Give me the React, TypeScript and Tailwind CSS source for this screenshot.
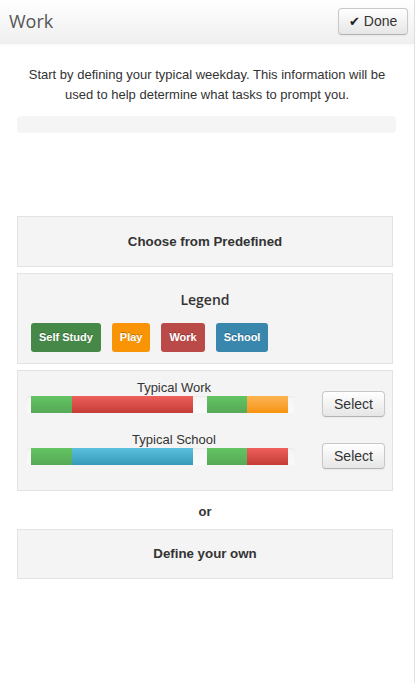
import React from 'react';

type Seg = { color: string; w: number };

const GREEN = 'bg-gradient-to-b from-[#62c462] to-[#57a957]';
const RED = 'bg-gradient-to-b from-[#ee5f5b] to-[#c43c35]';
const ORANGE = 'bg-gradient-to-b from-[#fbb450] to-[#f89406]';
const BLUE = 'bg-gradient-to-b from-[#5bc0de] to-[#339bb9]';

const templates: { name: string; segs: Seg[] }[] = [
  {
    name: 'Typical Work',
    segs: [
      { color: GREEN, w: 41 },
      { color: RED, w: 121 },
      { color: '', w: 14 },
      { color: GREEN, w: 40 },
      { color: ORANGE, w: 41 },
    ],
  },
  {
    name: 'Typical School',
    segs: [
      { color: GREEN, w: 41 },
      { color: BLUE, w: 121 },
      { color: '', w: 14 },
      { color: GREEN, w: 40 },
      { color: RED, w: 41 },
    ],
  },
];

const legend = [
  { label: 'Self Study', cls: 'bg-[#468847]' },
  { label: 'Play', cls: 'bg-[#f89406]' },
  { label: 'Work', cls: 'bg-[#b94a48]' },
  { label: 'School', cls: 'bg-[#3a87ad]' },
];

function Button({ children, className = '' }: { children: React.ReactNode; className?: string }) {
  return (
    <button
      className={`flex items-center justify-center gap-1 rounded-[4px] border border-[#c8c8c8] border-b-[#b3b3b3] bg-gradient-to-b from-white to-[#e6e6e6] text-[14px] text-[#333] shadow-[inset_0_1px_0_rgba(255,255,255,0.2),0_1px_2px_rgba(0,0,0,0.05)] ${className}`}
    >
      {children}
    </button>
  );
}

export default function App() {
  return (
    <div
      className="w-[415px] min-h-[683px] bg-white border-r border-[#e2e2e2] text-[#333]"
      style={{ fontFamily: '"Liberation Sans", Arial, sans-serif' }}
    >
      {/* Header */}
      <header className="h-[44px] flex items-center justify-between pl-[9px] pr-[6px] bg-gradient-to-b from-white to-[#efefef] shadow-[0_1px_3px_rgba(0,0,0,0.04)]">
        <h1 className="text-[18px] text-[#555] -mt-[1px]" style={{ fontFamily: '"Open Sans", sans-serif' }}>
          Work
        </h1>
        <Button className="w-[70px] h-[27px] -mt-[1px]">
          <span className="text-[13px] text-[#222]">✔</span>
          <span>Done</span>
        </Button>
      </header>

      <main className="px-[17px]">
        <p className="mt-[21px] text-center text-[13px] leading-[20px]">
          Start by defining your typical weekday. This information will be used to help determine what tasks to prompt you.
        </p>
        <div className="mt-[11px] mr-[1px] h-[17px] rounded-[4px] bg-[#f5f5f5]" />

        <div className="mt-[83px] w-[376px] flex flex-col">
          <section className="h-[51px] flex items-center justify-center border border-[#e3e3e3] bg-[#f4f4f4]">
            <h2 className="text-[13.3px] font-bold">Choose from Predefined</h2>
          </section>

          <section className="mt-[6px] h-[91px] border border-[#e3e3e3] bg-[#f4f4f4] px-[13px] pt-[17px]">
            <h3
              className="text-center text-[14px] font-semibold leading-[18px]"
              style={{ fontFamily: '"Open Sans", sans-serif' }}
            >
              Legend
            </h3>
            <div className="mt-[14px] flex gap-[11px]">
              {legend.map((l) => (
                <span
                  key={l.label}
                  className={`h-[29px] px-[8px] flex items-center rounded-[3px] text-[11px] font-bold text-white [text-shadow:0_-1px_0_rgba(0,0,0,0.25)] ${l.cls}`}
                >
                  {l.label}
                </span>
              ))}
            </div>
          </section>

          <section className="mt-[6px] h-[121px] border border-[#e3e3e3] bg-[#f4f4f4] pl-[8px] pt-[8px] flex flex-col gap-[18px]">
            {templates.map((t) => (
              <div key={t.name} className="flex items-end">
                <div className="w-[296px]">
                  <div className="text-center text-[13px] leading-[17px]">{t.name}</div>
                  <div className="w-[269px] h-[17px] flex px-[5px] rounded-[4px] bg-gradient-to-b from-[#f5f5f5] to-[#f9f9f9] shadow-[inset_0_1px_2px_rgba(0,0,0,0.05)]">
                    {t.segs.map((s, i) => (
                      <div key={i} className={`h-full ${s.color}`} style={{ width: s.w }} />
                    ))}
                  </div>
                </div>
                <Button className="w-[63px] h-[26px] mb-[-4px]">Select</Button>
              </div>
            ))}
          </section>

          <div className="mt-[13px] text-center text-[13px] font-bold leading-[16px]">or</div>

          <section className="mt-[9px] h-[50px] flex items-center justify-center border border-[#e3e3e3] bg-[#f4f4f4]">
            <h2 className="text-[13.3px] font-bold">Define your own</h2>
          </section>
        </div>
      </main>
    </div>
  );
}
